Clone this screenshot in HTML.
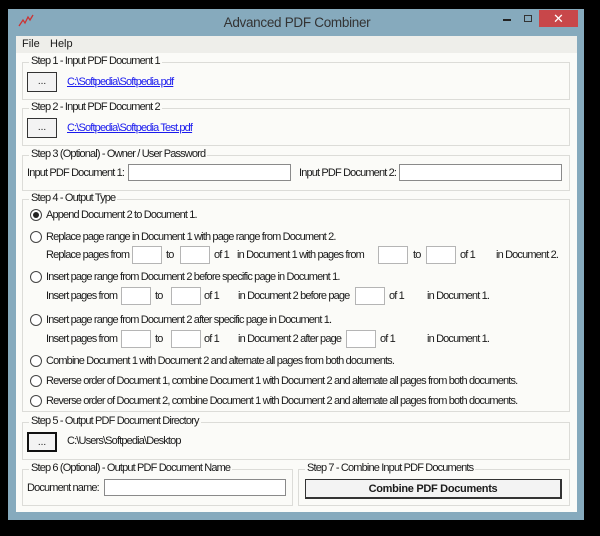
<!DOCTYPE html>
<html><head><style>
*{margin:0;padding:0;box-sizing:border-box}
body{width:600px;height:536px;background:#000;position:relative;overflow:hidden;font-family:"Liberation Sans",sans-serif;font-size:11px;letter-spacing:-0.85px;color:#1a1a1a}
.a{position:absolute;white-space:nowrap}
#win{left:8px;top:9px;width:576px;height:511px;background:#86aabd}
#client{left:16px;top:36px;width:561px;height:476px;background:#fbfbf8}
.menu{left:16px;top:36px;width:561px;height:17px;background:#eeeeea}
.g{position:absolute;border:1px solid #dcdcd8}
.lbl{position:absolute;background:#fbfbf8;padding:0 2px;top:-8px;left:6px;white-space:nowrap}
.in{position:absolute;border:1px solid #8a8a8a;background:#fff;height:17px}
.sm{position:absolute;border:1px solid #b5b5b5;background:#fff;height:18px;width:30px}
.btn{position:absolute;border:1px solid #333;background:#f3f3f3;width:30px;height:20px;text-align:center;line-height:18px;font-size:10px;letter-spacing:0}
.r{position:absolute;width:12px;height:12px;border:1px solid #444;border-radius:50%;background:#fff}
.link{color:#1a1aee;text-decoration:underline}
</style></head><body>
<div class="a" id="win"></div>
<svg class="a" style="left:18px;top:14px" width="16" height="14"><path d="M1 12 L5 6 L7 9 L10 3 L12 6 L15 1" stroke="#c33" fill="none" stroke-width="1.3"/></svg>
<div class="a" style="left:0;width:594px;top:15px;text-align:center;font-size:13.5px;letter-spacing:-0.3px;color:#333">Advanced PDF Combiner</div>
<div class="a" style="left:503px;top:19px;width:8px;height:2px;background:#222"></div>
<div class="a" style="left:524px;top:15px;width:8px;height:7px;border:1px solid #333"></div>
<div class="a" style="left:539px;top:10px;width:39px;height:17px;background:#c8474a;color:#fff;text-align:center;font-size:13px;line-height:17px;letter-spacing:0">✕</div>
<div class="a" id="client"></div>
<div class="a menu"></div>
<div class="a" style="left:22px;top:38px;font-size:11px;letter-spacing:0">File</div>
<div class="a" style="left:50px;top:38px;font-size:11px;letter-spacing:0">Help</div>

<div class="g" style="left:22px;top:62px;width:548px;height:38px"><div class="lbl">Step 1 - Input PDF Document 1</div></div>
<div class="btn" style="left:27px;top:72px">...</div>
<div class="a link" style="left:67px;top:76px">C:\Softpedia\Softpedia.pdf</div>

<div class="g" style="left:22px;top:108px;width:548px;height:38px"><div class="lbl">Step 2 - Input PDF Document 2</div></div>
<div class="btn" style="left:27px;top:118px">...</div>
<div class="a link" style="left:67px;top:122px">C:\Softpedia\Softpedia Test.pdf</div>

<div class="g" style="left:22px;top:155px;width:548px;height:36px"><div class="lbl">Step 3 (Optional) - Owner / User Password</div></div>
<div class="a" style="left:27px;top:167px">Input PDF Document 1:</div>
<div class="in" style="left:128px;top:164px;width:163px"></div>
<div class="a" style="left:299px;top:167px">Input PDF Document 2:</div>
<div class="in" style="left:399px;top:164px;width:163px"></div>

<div class="g" style="left:22px;top:199px;width:548px;height:213px"><div class="lbl">Step 4 - Output Type</div></div>
<div class="r" style="left:30px;top:209px"><div style="position:absolute;left:2px;top:2px;width:6px;height:6px;border-radius:50%;background:#222"></div></div>
<div class="a" style="left:46px;top:209px">Append Document 2 to Document 1.</div>
<div class="r" style="left:30px;top:231px"></div>
<div class="a" style="left:46px;top:231px">Replace page range in Document 1 with page range from Document 2.</div>
<div class="a" style="left:46px;top:249px">Replace pages from</div>
<div class="sm" style="left:132px;top:246px"></div>
<div class="a" style="left:166px;top:249px">to</div>
<div class="sm" style="left:180px;top:246px"></div>
<div class="a" style="left:214px;top:249px">of 1</div>
<div class="a" style="left:237px;top:249px">in Document 1 with pages from</div>
<div class="sm" style="left:378px;top:246px"></div>
<div class="a" style="left:413px;top:249px">to</div>
<div class="sm" style="left:426px;top:246px"></div>
<div class="a" style="left:460px;top:249px">of 1</div>
<div class="a" style="left:496px;top:249px">in Document 2.</div>

<div class="r" style="left:30px;top:271px"></div>
<div class="a" style="left:46px;top:271px">Insert page range from Document 2 before specific page in Document 1.</div>
<div class="a" style="left:46px;top:290px">Insert pages from</div>
<div class="sm" style="left:121px;top:287px"></div>
<div class="a" style="left:155px;top:290px">to</div>
<div class="sm" style="left:171px;top:287px"></div>
<div class="a" style="left:204px;top:290px">of 1</div>
<div class="a" style="left:238px;top:290px">in Document 2 before page</div>
<div class="sm" style="left:355px;top:287px"></div>
<div class="a" style="left:389px;top:290px">of 1</div>
<div class="a" style="left:427px;top:290px">in Document 1.</div>

<div class="r" style="left:30px;top:314px"></div>
<div class="a" style="left:46px;top:314px">Insert page range from Document 2 after specific page in Document 1.</div>
<div class="a" style="left:46px;top:333px">Insert pages from</div>
<div class="sm" style="left:121px;top:330px"></div>
<div class="a" style="left:155px;top:333px">to</div>
<div class="sm" style="left:171px;top:330px"></div>
<div class="a" style="left:204px;top:333px">of 1</div>
<div class="a" style="left:238px;top:333px">in Document 2 after page</div>
<div class="sm" style="left:346px;top:330px"></div>
<div class="a" style="left:380px;top:333px">of 1</div>
<div class="a" style="left:427px;top:333px">in Document 1.</div>

<div class="r" style="left:30px;top:355px"></div>
<div class="a" style="left:46px;top:355px">Combine Document 1 with Document 2 and alternate all pages from both documents.</div>
<div class="r" style="left:30px;top:375px"></div>
<div class="a" style="left:46px;top:375px">Reverse order of Document 1, combine Document 1 with Document 2 and alternate all pages from both documents.</div>
<div class="r" style="left:30px;top:395px"></div>
<div class="a" style="left:46px;top:395px">Reverse order of Document 2, combine Document 1 with Document 2 and alternate all pages from both documents.</div>

<div class="g" style="left:22px;top:422px;width:548px;height:38px"><div class="lbl">Step 5 - Output PDF Document Directory</div></div>
<div class="btn" style="left:27px;top:432px;border:2px solid #111">...</div>
<div class="a" style="left:67px;top:435px">C:\Users\Softpedia\Desktop</div>

<div class="g" style="left:22px;top:469px;width:271px;height:37px"><div class="lbl">Step 6 (Optional) - Output PDF Document Name</div></div>
<div class="a" style="left:27px;top:482px">Document name:</div>
<div class="in" style="left:104px;top:479px;width:182px"></div>
<div class="g" style="left:298px;top:469px;width:272px;height:37px"><div class="lbl">Step 7 - Combine Input PDF Documents</div></div>
<div class="a" style="left:305px;top:479px;width:257px;height:20px;border:1px solid #333;border-width:1px 2px 2px 1px;background:#f3f3f3;text-align:center;line-height:18px;font-weight:bold;font-size:11px;letter-spacing:-0.3px">Combine PDF Documents</div>
</body></html>
